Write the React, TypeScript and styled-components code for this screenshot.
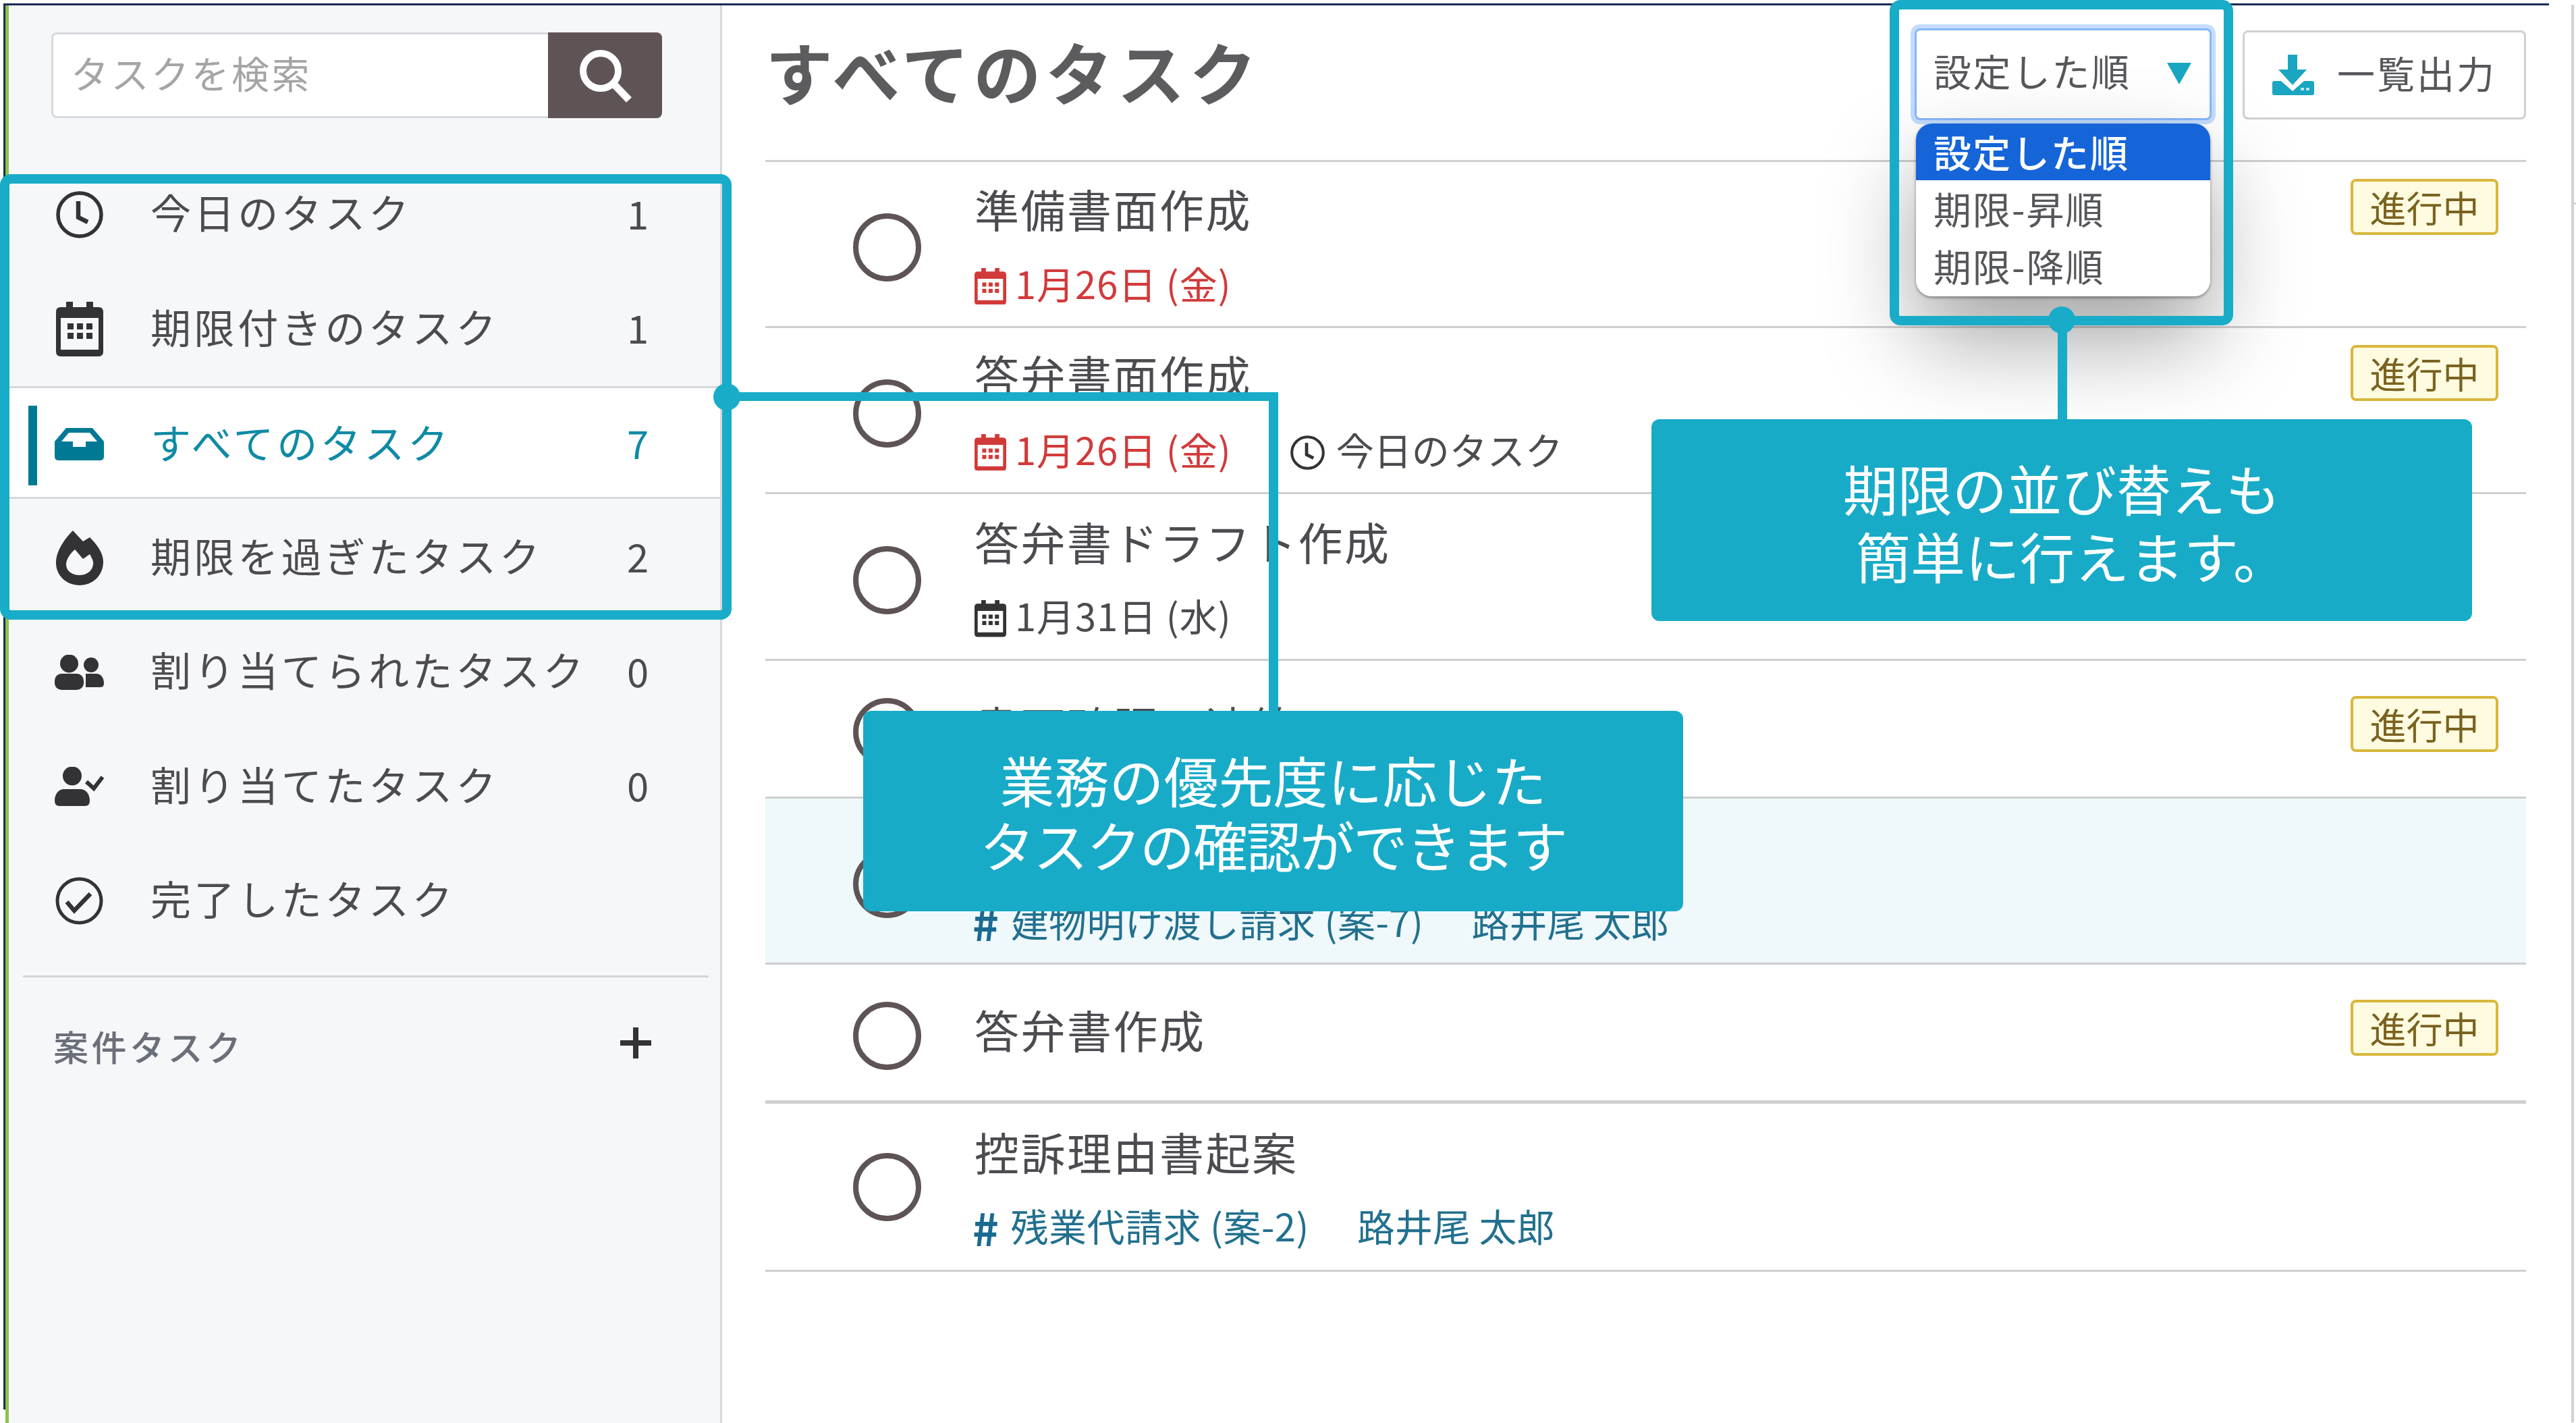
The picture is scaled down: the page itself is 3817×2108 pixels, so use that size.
import React from "react";
import styled, { createGlobalStyle } from "styled-components";

const GlobalStyle = createGlobalStyle`
  html, body { margin: 0; padding: 0; background: #fff; }
  body { font-family: "Noto Sans CJK JP", "Noto Sans", sans-serif; }
  * { box-sizing: border-box; }
`;

const Screen = styled.div`
  position: relative;
  display: flex;
  width: 3817px;
  height: 2108px;
  overflow: hidden;
  background: #fff;
  padding-top: 5px;
  padding-left: 5px;
`;

const AppFrame = styled.div`
  flex: none;
  display: flex;
  width: 3772px;
  height: 2083px;
  border-top: 3px solid #1c2a55;
  border-left: 3px solid #1c2a55;
`;

const WindowEdge = styled.div`
  position: relative;
  flex: none;
  width: 4px;
  height: 2100px;
  margin: 2px 0 0 33px;
  background: #d2d2d2;
  &::after {
    content: "";
    position: absolute;
    left: 4px;
    top: 293px;
    width: 3px;
    height: 3px;
    background: #d2d2d2;
  }
`;

const Sidebar = styled.aside`
  flex: none;
  width: 1062px;
  height: 2100px;
  background: #f6f7f9;
  border-left: 5px solid #8bc34a;
  border-right: 3px solid #d6d8db;
  padding-top: 40px;
`;

const SearchBox = styled.div`
  display: flex;
  width: 905px;
  height: 127px;
  margin-left: 63px;
`;

const SearchInput = styled.input`
  flex: none;
  width: 736px;
  height: 100%;
  border: 3px solid #d6d9de;
  border-right: none;
  border-radius: 8px 0 0 8px;
  background: #fff;
  padding: 0 0 10px 26px;
  font-family: inherit;
  font-size: 56px;
  letter-spacing: 3.5px;
  outline: none;
  &::placeholder { color: #a5a5a5; opacity: 1; }
`;

const SearchButton = styled.button`
  flex: 1;
  display: flex;
  align-items: center;
  justify-content: center;
  border: none;
  padding: 0;
  border-radius: 0 8px 8px 0;
  background: #5f5455;
`;

const Nav = styled.nav`
  margin-top: 58px;
`;

const NavItem = styled.div<{ $active?: boolean }>`
  position: relative;
  display: flex;
  align-items: center;
  height: ${(p) => (p.$active ? "166.5px" : "169.5px")};
  margin-bottom: ${(p) => (p.$active ? "3px" : "0")};
  padding: ${(p) => (p.$active ? "6px 92px 0 68px" : "0 92px 0 68px")};
  background: ${(p) => (p.$active ? "#fff" : "transparent")};
  border-top: ${(p) => (p.$active ? "3px solid #d6d8db" : "none")};
  border-bottom: ${(p) => (p.$active ? "3px solid #d6d8db" : "none")};
  color: ${(p) => (p.$active ? "#0f8aa5" : "#4b4b50")};
  &::before {
    content: "";
    display: ${(p) => (p.$active ? "block" : "none")};
    position: absolute;
    left: 29px;
    top: 26px;
    width: 13px;
    height: 118px;
    background: #007a94;
  }
`;

const NavIcon = styled.span`
  flex: none;
  display: flex;
  align-items: center;
  justify-content: center;
  width: 73px;
`;

const NavLabel = styled.span`
  flex: 1;
  margin: -9px 0 0 69px;
  font-size: 60px;
  letter-spacing: 4.6px;
  white-space: nowrap;
  line-height: 1;
`;

const NavCount = styled.span`
  flex: none;
  width: 60px;
  margin-top: -6px;
  text-align: center;
  font-size: 58px;
  line-height: 1;
`;

const SideRule = styled.hr`
  margin: 25px 17px 0 21px;
  border: none;
  height: 3px;
  background: #d3d5d8;
`;

const SectionHead = styled.div`
  display: flex;
  align-items: center;
  justify-content: space-between;
  margin: 67px 102px 0 66px;
  height: 70px;
`;

const SectionTitle = styled.span`
  font-size: 52px;
  font-weight: 500;
  letter-spacing: 4.5px;
  color: #6b6f7a;
`;

const PlusGlyph = styled.span`
  display: flex;
  margin-top: -10px;
`;

const Main = styled.main`
  flex: 1;
  min-width: 0;
  padding: 0 34px 0 64px;
`;

const Header = styled.header`
  display: flex;
  align-items: flex-start;
  justify-content: space-between;
  height: 229px;
  padding-top: 34px;
`;

const PageTitle = styled.h1`
  margin: 0;
  font-size: 100px;
  font-weight: 700;
  letter-spacing: 6.5px;
  line-height: 126px;
  color: #5c5c5f;
`;

const HeaderTools = styled.div`
  display: flex;
  align-items: flex-start;
  gap: 46px;
`;

const SortWrap = styled.div`
  position: relative;
  width: 440px;
`;

const SortControl = styled.div`
  display: flex;
  align-items: center;
  justify-content: space-between;
  height: 136px;
  padding: 0 27px 0 25px;
  background: #fff;
  border: 3px solid #86b7fe;
  border-radius: 8px;
  box-shadow: 0 0 0 6px #c4ddfc;
  font-size: 56px;
  letter-spacing: 2.5px;
  color: #55575a;
`;

const SortLabel = styled.span`
  margin-top: -14px;
`;

const SortCaret = styled.span`
  display: flex;
  margin-top: -2px;
`;

const SortMenu = styled.ul`
  position: absolute;
  z-index: 2;
  top: 141px;
  left: 2px;
  width: 436px;
  height: 256px;
  margin: 0;
  padding: 0;
  list-style: none;
  background: #fff;
  border-radius: 24px;
  overflow: hidden;
`;

const SortShadow = styled.div`
  position: absolute;
  z-index: 1;
  top: 141px;
  left: 2px;
  width: 436px;
  height: 256px;
  border-radius: 24px;
  box-shadow: 0 2px 4px rgba(0, 0, 0, 0.4), 0 65px 135px rgba(0, 0, 0, 0.36);
`;

const SortOption = styled.li<{ $selected?: boolean }>`
  display: flex;
  align-items: center;
  height: ${(p) => (p.$selected ? "84px" : "85px")};
  padding: 0 0 4px 26px;
  font-size: 56px;
  letter-spacing: 2px;
  font-weight: ${(p) => (p.$selected ? 500 : 400)};
  background: ${(p) => (p.$selected ? "#1565d8" : "transparent")};
  color: ${(p) => (p.$selected ? "#fff" : "#55575a")};
`;

const ExportButton = styled.div`
  display: flex;
  align-items: center;
  justify-content: center;
  gap: 34px;
  width: 420px;
  height: 132px;
  margin-top: 3px;
  background: #fff;
  border: 3px solid #d0d0d0;
  border-radius: 8px;
  font-size: 56px;
  letter-spacing: 3px;
  color: #55575a;
`;

const ExportLabel = styled.span`
  margin-top: -10px;
`;

const TaskList = styled.ul`
  margin: 0;
  padding: 0;
  list-style: none;
  border-top: 3px solid #cfcfcf;
`;

const TaskRow = styled.li<{ $h: number; $tint?: boolean; $heavy?: boolean }>`
  display: flex;
  align-items: center;
  height: ${(p) => p.$h}px;
  padding: 0 41px 0 130px;
  background: ${(p) => (p.$tint ? "#eff8fb" : "#fff")};
  border-bottom: ${(p) => (p.$heavy ? "5px" : "3px")} solid #cfcfcf;
`;

const TaskCheck = styled.span<{ $nudge?: number }>`
  flex: none;
  width: 101px;
  height: 101px;
  margin-top: ${(p) => p.$nudge ?? 10}px;
  border: 8px solid #5f5455;
  border-radius: 50%;
`;

const TaskBody = styled.div<{ $single?: boolean; $drop?: number }>`
  flex: 1;
  min-width: 0;
  margin-left: 79px;
  padding-top: ${(p) => p.$drop ?? 0}px;
  padding-bottom: ${(p) => (p.$single ? "14px" : "0")};
`;

const TitleLine = styled.div`
  display: flex;
  align-items: center;
  justify-content: space-between;
  min-height: 83px;
`;

const TaskTitle = styled.span`
  font-size: 66px;
  letter-spacing: 2.5px;
  line-height: 83px;
  color: #4b4b50;
  margin-top: 4px;
`;

const StatusBadge = styled.span`
  flex: none;
  display: flex;
  align-items: center;
  justify-content: center;
  width: 219px;
  height: 83px;
  border: 4px solid #d9b73c;
  border-radius: 8px;
  background: #fffbe0;
  font-size: 54px;
  color: #7a6320;
`;

const SubLine = styled.div`
  display: flex;
  align-items: center;
  height: 72px;
  margin-top: 38px;
  font-size: 56px;
  white-space: pre;
`;

const SubText = styled.span`
  margin-top: -12px;
`;

const DateTag = styled.span<{ $overdue?: boolean }>`
  display: inline-flex;
  align-items: center;
  gap: 13px;
  letter-spacing: 1px;
  color: ${(p) => (p.$overdue ? "#d23a3a" : "#4b4b50")};
`;

const TodayTag = styled.span`
  display: inline-flex;
  align-items: center;
  gap: 17px;
  margin-left: 87px;
  color: #4b4b50;
`;

const CaseTag = styled.span`
  display: inline-flex;
  align-items: center;
  gap: 17px;
  letter-spacing: 0.5px;
  color: #22708e;
`;

const Hash = styled.b`
  margin: -8px 0 0 -3px;
  font-size: 66px;
  line-height: 1;
  font-weight: 700;
  color: #1a6a92;
`;

const Person = styled.span`
  margin: -12px 0 0 71px;
  color: #22708e;
`;

const Highlight = styled.div`
  position: absolute;
  z-index: 3;
  border: 14px solid #19acc9;
  border-radius: 16px;
  pointer-events: none;
`;

const NavHighlight = styled(Highlight)`
  left: 0;
  top: 258px;
  width: 1084px;
  height: 660px;
`;

const SortHighlight = styled(Highlight)`
  left: 2800px;
  top: 0;
  width: 509px;
  height: 482px;
`;

const Dot = styled.span`
  position: absolute;
  z-index: 4;
  width: 40px;
  height: 40px;
  border-radius: 50%;
  background: #19acc9;
`;

const NavDot = styled(Dot)`
  left: 1057px;
  top: 568px;
`;

const SortDot = styled(Dot)`
  left: 3035px;
  top: 454px;
`;

const NavConnector = styled.div`
  position: absolute;
  z-index: 4;
  left: 1077px;
  top: 581px;
  width: 817px;
  height: 480px;
  border-top: 13px solid #19acc9;
  border-right: 14px solid #19acc9;
`;

const SortConnector = styled.div`
  position: absolute;
  z-index: 4;
  left: 3049px;
  top: 474px;
  width: 14px;
  height: 150px;
  background: #19acc9;
`;

const Callout = styled.div`
  position: absolute;
  z-index: 5;
  display: flex;
  flex-direction: column;
  align-items: center;
  justify-content: center;
  background: #18abc8;
  border-radius: 12px;
  color: #fff;
  font-size: 81px;
  font-weight: 400;
  white-space: nowrap;
`;

const TaskCallout = styled(Callout)`
  left: 1279px;
  top: 1053px;
  width: 1215px;
  height: 297px;
  line-height: 96px;
`;

const SortCallout = styled(Callout)`
  left: 2447px;
  top: 621px;
  width: 1216px;
  height: 299px;
  padding-top: 2px;
  line-height: 100px;
`;

const TightLine = styled.span`
  letter-spacing: -2px;
`;

const IndentedLine = styled.span`
  padding-left: 30px;
`;

const dark = "#333335";

const ClockIcon = ({ size = 70, color = dark }: { size?: number; color?: string }) => (
  <svg width={size} height={size} viewBox="0 0 70 70" fill="none" stroke={color}>
    <circle cx="35" cy="35" r="32" strokeWidth="5.5" />
    <path d="M33 15V39L47 46" strokeWidth="6.5" />
  </svg>
);

const CalendarIcon = ({ w = 70, color = dark }: { w?: number; color?: string }) => (
  <svg width={w} height={(w * 81) / 70} viewBox="0 0 70 81" fill={color}>
    <rect x="15" width="10" height="16" />
    <rect x="45" width="10" height="16" />
    <path
      fillRule="evenodd"
      d="M7 8H63Q70 8 70 15V74Q70 81 63 81H7Q0 81 0 74V15Q0 8 7 8ZM7 24V71H63V24Z"
    />
    {[17, 31, 45].map((x) => (
      <React.Fragment key={x}>
        <rect x={x} y="32" width="9" height="9" />
        <rect x={x} y="46" width="9" height="9" />
      </React.Fragment>
    ))}
  </svg>
);

const TrayIcon = () => (
  <svg width="73" height="48" viewBox="0 0 73 48" fill="#007a94">
    <path
      fillRule="evenodd"
      d="M17 0H56L73 20V42Q73 48 67 48H6Q0 48 0 42V20ZM21 7L10 20H27V28H46V20H63L52 7Z"
    />
  </svg>
);

const FlameIcon = () => (
  <svg width="70" height="81" viewBox="0 0 70 81" fill={dark}>
    <path
      fillRule="evenodd"
      d="M25 0L40 16L50 10C62 22 70 34 70 46C70 67 54 81 35 81C16 81 0 67 0 48C0 30 13 12 25 0ZM28 28C22 33 15 42 15 50C15 60 24 66 35 66C45 66 54 60 55 50C56 47 54 42 50 35L40 42Z"
    />
  </svg>
);

const PeopleIcon = () => (
  <svg width="73" height="52" viewBox="0 0 73 52" fill={dark}>
    <circle cx="21.5" cy="13" r="13.5" />
    <rect y="28" width="43" height="24" rx="10" />
    <circle cx="54" cy="15" r="11" />
    <path d="M46 28H62C68 28 73 34 73 42Q73 48 68 48H46Z" />
  </svg>
);

const PersonCheckIcon = () => (
  <svg width="73" height="58" viewBox="0 0 73 58">
    <circle cx="26" cy="13.5" r="14" fill={dark} />
    <path d="M14 33H38C46 33 52 40 52 50Q52 58 45 58H7Q0 58 0 50C0 40 6 33 14 33Z" fill={dark} />
    <path d="M47 22L58 32L71 15" fill="none" stroke={dark} strokeWidth="6" />
  </svg>
);

const CheckCircleIcon = () => (
  <svg width="71" height="71" viewBox="0 0 71 71" fill="none" stroke={dark}>
    <circle cx="35.5" cy="35.5" r="32.5" strokeWidth="5" />
    <path d="M17 37L28 50L52 25" strokeWidth="6.5" />
  </svg>
);

const SearchIcon = () => (
  <svg width="80" height="80" viewBox="0 0 80 80" fill="none" stroke="#fff">
    <circle cx="33" cy="33" r="26" strokeWidth="10" />
    <path d="M52 52L75 76" strokeWidth="11" />
  </svg>
);

const PlusIcon = () => (
  <svg width="46" height="46" viewBox="0 0 46 46" stroke="#333335" strokeWidth="8">
    <path d="M23 0V46M0 23H46" />
  </svg>
);

const CaretIcon = () => (
  <svg width="36" height="32" viewBox="0 0 36 32" fill="#1aa5c0">
    <path d="M0 0H36L18 32Z" />
  </svg>
);

const DownloadIcon = () => (
  <svg width="62" height="60" viewBox="0 0 62 60" fill="#1aa5c0">
    <path d="M23 0H37V22H51L30 45L9 22H23Z" />
    <path d="M3 39H13L30 54L47 39H59Q62 39 62 42V57Q62 60 59 60H3Q0 60 0 57V42Q0 39 3 39Z" />
    <rect x="42" y="49" width="5" height="4" fill="#fff" opacity="0.7" />
    <rect x="50" y="49" width="5" height="4" fill="#fff" opacity="0.7" />
  </svg>
);

const navItems = [
  { icon: <ClockIcon />, label: "今日のタスク", count: "1" },
  { icon: <CalendarIcon />, label: "期限付きのタスク", count: "1" },
  { icon: <TrayIcon />, label: "すべてのタスク", count: "7", active: true },
  { icon: <FlameIcon />, label: "期限を過ぎたタスク", count: "2" },
  { icon: <PeopleIcon />, label: "割り当てられたタスク", count: "0" },
  { icon: <PersonCheckIcon />, label: "割り当てたタスク", count: "0" },
  { icon: <CheckCircleIcon />, label: "完了したタスク", count: "" },
];

type Task = {
  title: string;
  h: number;
  badge?: boolean;
  tint?: boolean;
  heavy?: boolean;
  date?: string;
  overdue?: boolean;
  today?: boolean;
  caseName?: string;
  nudge?: number;
  drop?: number;
};

const tasks: Task[] = [
  { title: "準備書面作成", h: 246, badge: true, date: "1月26日 (金)", overdue: true },
  { title: "答弁書面作成", h: 246, badge: true, date: "1月26日 (金)", overdue: true, today: true },
  { title: "答弁書ドラフト作成", h: 247, date: "1月31日 (水)" },
  { title: "書面確認・連絡", h: 204, badge: true },
  { title: "", h: 246, tint: true, caseName: "建物明け渡し請求 (案-7)", drop: 8 },
  { title: "答弁書作成", h: 206, badge: true, heavy: true },
  { title: "控訴理由書起案", h: 249, caseName: "残業代請求 (案-2)", nudge: 0 },
];

export default function App() {
  return (
    <Screen>
      <GlobalStyle />
      <AppFrame>
        <Sidebar>
          <SearchBox>
            <SearchInput placeholder="タスクを検索" readOnly />
            <SearchButton aria-label="検索">
              <SearchIcon />
            </SearchButton>
          </SearchBox>
          <Nav>
            {navItems.map((item) => (
              <NavItem key={item.label} $active={item.active}>
                <NavIcon>{item.icon}</NavIcon>
                <NavLabel>{item.label}</NavLabel>
                <NavCount>{item.count}</NavCount>
              </NavItem>
            ))}
          </Nav>
          <SideRule />
          <SectionHead>
            <SectionTitle>案件タスク</SectionTitle>
            <PlusGlyph>
              <PlusIcon />
            </PlusGlyph>
          </SectionHead>
        </Sidebar>
        <Main>
          <Header>
            <PageTitle>すべてのタスク</PageTitle>
            <HeaderTools>
              <SortWrap>
                <SortControl>
                  <SortLabel>設定した順</SortLabel>
                  <SortCaret>
                    <CaretIcon />
                  </SortCaret>
                </SortControl>
                <SortShadow />
                <SortMenu>
                  <SortOption $selected>設定した順</SortOption>
                  <SortOption>期限-昇順</SortOption>
                  <SortOption>期限-降順</SortOption>
                </SortMenu>
              </SortWrap>
              <ExportButton>
                <DownloadIcon />
                <ExportLabel>一覧出力</ExportLabel>
              </ExportButton>
            </HeaderTools>
          </Header>
          <TaskList>
            {tasks.map((t, i) => (
              <TaskRow key={i} $h={t.h} $tint={t.tint} $heavy={t.heavy}>
                <TaskCheck $nudge={t.nudge} />
                <TaskBody $single={!t.date && !t.caseName} $drop={t.drop}>
                  <TitleLine>
                    <TaskTitle>{t.title}</TaskTitle>
                    {t.badge && <StatusBadge>進行中</StatusBadge>}
                  </TitleLine>
                  {t.date && (
                    <SubLine>
                      <DateTag $overdue={t.overdue}>
                        <CalendarIcon w={47} color={t.overdue ? "#d23a3a" : dark} />
                        <SubText>{t.date}</SubText>
                      </DateTag>
                      {t.today && (
                        <TodayTag>
                          <ClockIcon size={51} />
                          <SubText>今日のタスク</SubText>
                        </TodayTag>
                      )}
                    </SubLine>
                  )}
                  {t.caseName && (
                    <SubLine>
                      <CaseTag>
                        <Hash>#</Hash>
                        <SubText>{t.caseName}</SubText>
                      </CaseTag>
                      <Person>路井尾 太郎</Person>
                    </SubLine>
                  )}
                </TaskBody>
              </TaskRow>
            ))}
          </TaskList>
        </Main>
      </AppFrame>
      <WindowEdge />
      <NavHighlight />
      <SortHighlight />
      <NavConnector />
      <SortConnector />
      <NavDot />
      <SortDot />
      <TaskCallout>
        <span>業務の優先度に応じた</span>
        <TightLine>タスクの確認ができます</TightLine>
      </TaskCallout>
      <SortCallout>
        <span>期限の並び替えも</span>
        <IndentedLine>簡単に行えます。</IndentedLine>
      </SortCallout>
    </Screen>
  );
}
